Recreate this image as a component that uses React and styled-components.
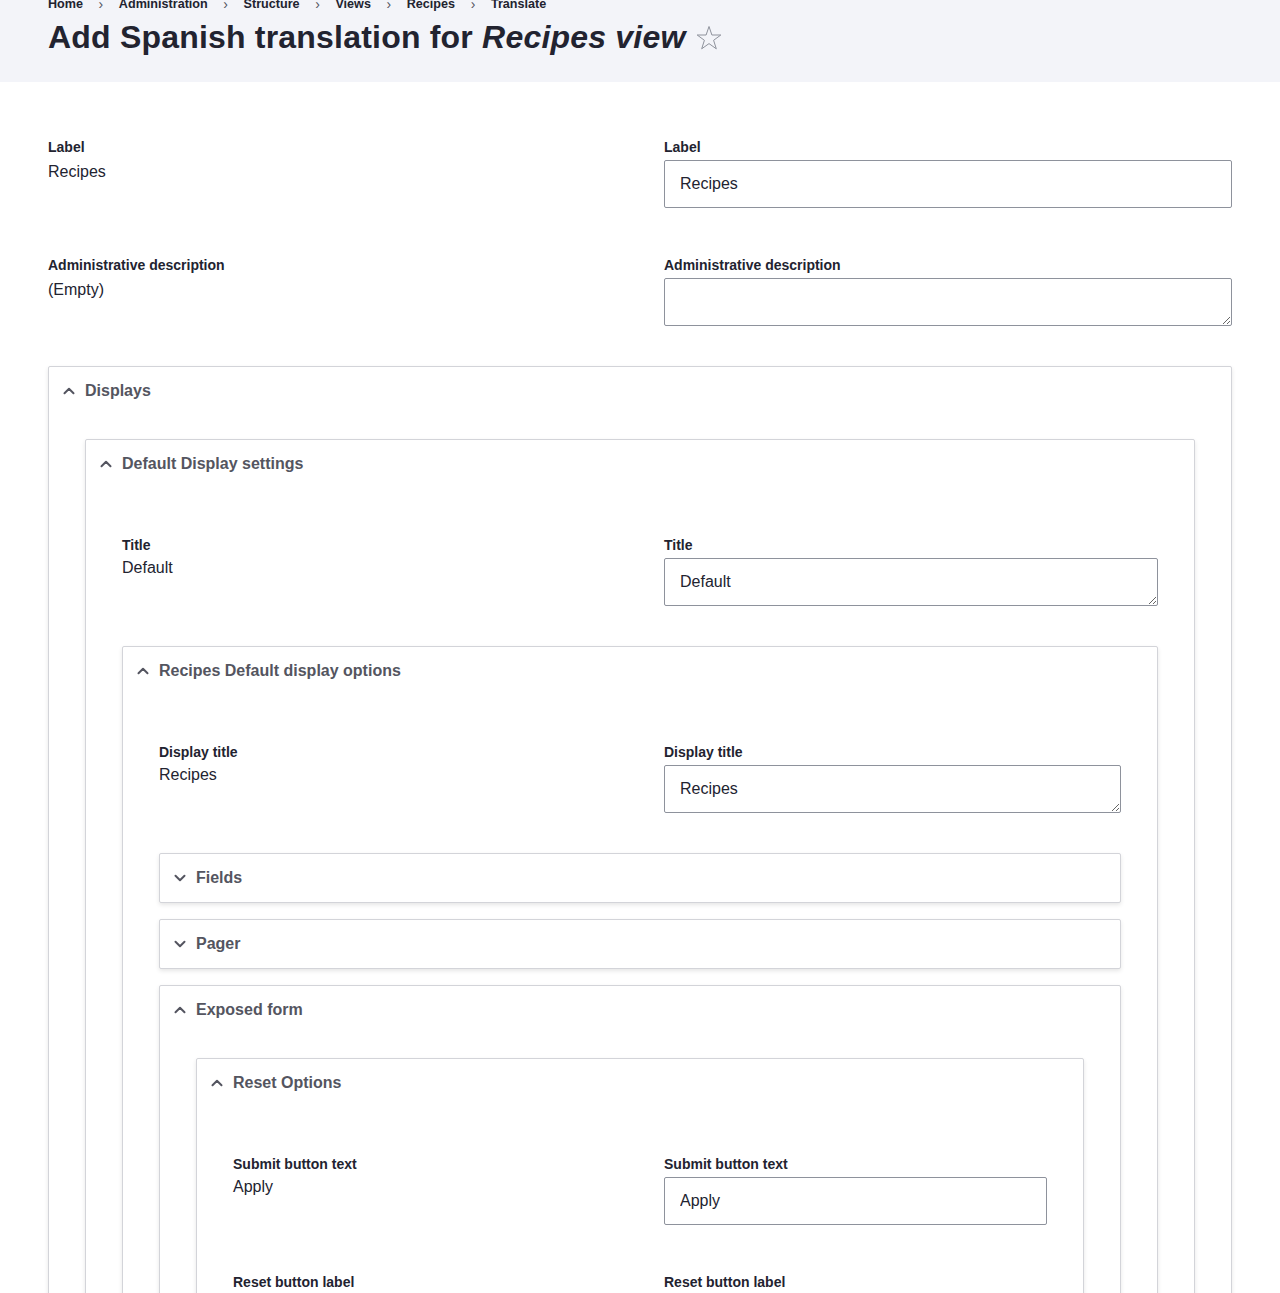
import React from "react";
import styled, { createGlobalStyle } from "styled-components";

const Global = createGlobalStyle`
  html, body { margin: 0; padding: 0; background: #fff; }
  body {
    font-family: "Liberation Sans", Arial, sans-serif;
    color: #222330;
    font-size: 16px;
    line-height: 1.5;
  }
  * { box-sizing: border-box; }
`;

const Header = styled.header`
  background: #f3f4f9;
  padding: 0 48px 25px;
`;

const Crumbs = styled.ol`
  list-style: none;
  margin: -3px 0 0;
  padding: 0;
  display: flex;
  align-items: center;
  font-size: 12.6px;
  font-weight: 700;
  line-height: 15px;
  color: #222330;
`;

const Crumb = styled.li`
  display: flex;
  align-items: center;
`;

const Sep = styled.span`
  margin: 0 15.6px;
  color: #545560;
  font-weight: 400;
  font-size: 14px;
`;

const TitleRow = styled.div`
  display: flex;
  align-items: center;
  margin-top: 5px;
`;

const H1 = styled.h1`
  margin: 0;
  font-size: 32px;
  line-height: 40px;
  font-weight: 700;
  letter-spacing: 0.2px;
  color: #222330;
  em { font-style: italic; }
`;

const StarBtn = styled.span`
  display: inline-flex;
  margin-left: 11px;
  margin-top: 2px;
`;

const Main = styled.main`
  padding: 32px 48px 48px;
  display: flex;
  flex-direction: column;
`;

const Row = styled.div`
  display: grid;
  grid-template-columns: ${(p) => 616 - 37 * p.$depth}px 1fr;
  margin: 24px 0;
`;

const Col = styled.div`
  display: flex;
  flex-direction: column;
  min-width: 0;
`;

const Label = styled.label`
  font-size: 14px;
  font-weight: 700;
  line-height: 18px;
  color: #222330;
  margin-bottom: 4px;
`;

const Value = styled.div`
  font-size: 16px;
  line-height: 24px;
  margin-top: ${(p) => (p.$nested ? "-2px" : "0")};
`;

const Input = styled.input`
  height: 48px;
  width: 100%;
  border: 1px solid #8e929c;
  border-radius: 2px;
  padding: 0 15px;
  font: inherit;
  font-size: 16px;
  color: #222330;
  background: #fff;
  outline: none;
`;

const Textarea = styled.textarea`
  display: block;
  height: 48px;
  min-height: 48px;
  width: 100%;
  border: 1px solid #8e929c;
  border-radius: 2px;
  padding: 11px 15px;
  font: inherit;
  font-size: 16px;
  line-height: 24px;
  color: #222330;
  background: #fff;
  resize: vertical;
  outline: none;
`;

const DetailsBox = styled.details`
  border: 1px solid #d3d4d9;
  border-radius: 2px;
  box-shadow: 0 2px 4px rgba(0, 0, 0, 0.1);
  background: #fff;
  margin-top: 16px;
  &:first-child { margin-top: 0; }
`;

const Summary = styled.summary`
  list-style: none;
  display: flex;
  align-items: center;
  height: 48px;
  padding-left: 14px;
  font-size: 16px;
  font-weight: 700;
  line-height: 24px;
  color: #545560;
  cursor: pointer;
  &::-webkit-details-marker { display: none; }
  &::marker { content: ""; }
  svg { margin-right: 10px; flex: none; }
`;

const Wrapper = styled.div`
  padding: 24px 36px 24px;
  display: flex;
  flex-direction: column;
`;

const Chevron = ({ open }) => (
  <svg width="12" height="12" viewBox="0 0 12 12" aria-hidden="true">
    <path
      d={open ? "M1.5 8.2 L6 3.8 L10.5 8.2" : "M1.5 3.8 L6 8.2 L10.5 3.8"}
      fill="none"
      stroke="#545560"
      strokeWidth="2"
      strokeLinecap="round"
      strokeLinejoin="round"
    />
  </svg>
);

const Star = () => (
  <svg width="26" height="26" viewBox="0 0 26 26" aria-hidden="true">
    <polygon
      points="13,1.5 15.9,10 24.8,10 17.6,15.3 20.3,23.8 13,18.6 5.7,23.8 8.4,15.3 1.2,10 10.1,10"
      fill="none"
      stroke="#8e929c"
      strokeWidth="1"
      strokeLinejoin="miter"
    />
  </svg>
);

const Details = ({ title, open = true, children }) => (
  <DetailsBox open={open}>
    <Summary>
      <Chevron open={open} />
      {title}
    </Summary>
    {open && <Wrapper>{children}</Wrapper>}
  </DetailsBox>
);

const Field = ({ depth, label, value, textarea }) => (
  <Row $depth={depth}>
    <Col>
      <Label>{label}</Label>
      <Value $nested={depth > 0}>{value === "" ? "(Empty)" : value}</Value>
    </Col>
    <Col>
      <Label>{label}</Label>
      {textarea ? (
        <Textarea rows={1} defaultValue={value} />
      ) : (
        <Input type="text" defaultValue={value} />
      )}
    </Col>
  </Row>
);

const crumbs = ["Home", "Administration", "Structure", "Views", "Recipes", "Translate"];

export default function App() {
  return (
    <>
      <Global />
      <Header>
        <Crumbs>
          {crumbs.map((c, i) => (
            <Crumb key={c}>
              {i > 0 && <Sep>›</Sep>}
              {c}
            </Crumb>
          ))}
        </Crumbs>
        <TitleRow>
          <H1>
            Add Spanish translation for <em>Recipes view</em>
          </H1>
          <StarBtn>
            <Star />
          </StarBtn>
        </TitleRow>
      </Header>
      <Main>
        <Field depth={0} label="Label" value="Recipes" />
        <Field depth={0} label="Administrative description" value="" textarea />
        <Details title="Displays">
          <Details title="Default Display settings">
            <Field depth={2} label="Title" value="Default" textarea />
            <Details title="Recipes Default display options">
              <Field depth={3} label="Display title" value="Recipes" textarea />
              <Details title="Fields" open={false} />
              <Details title="Pager" open={false} />
              <Details title="Exposed form">
                <Details title="Reset Options">
                  <Field depth={5} label="Submit button text" value="Apply" />
                  <Field depth={5} label="Reset button label" value="Reset" />
                  <Field depth={5} label="Exposed sorts label" value="Sort by" />
                </Details>
              </Details>
            </Details>
          </Details>
        </Details>
      </Main>
    </>
  );
}
